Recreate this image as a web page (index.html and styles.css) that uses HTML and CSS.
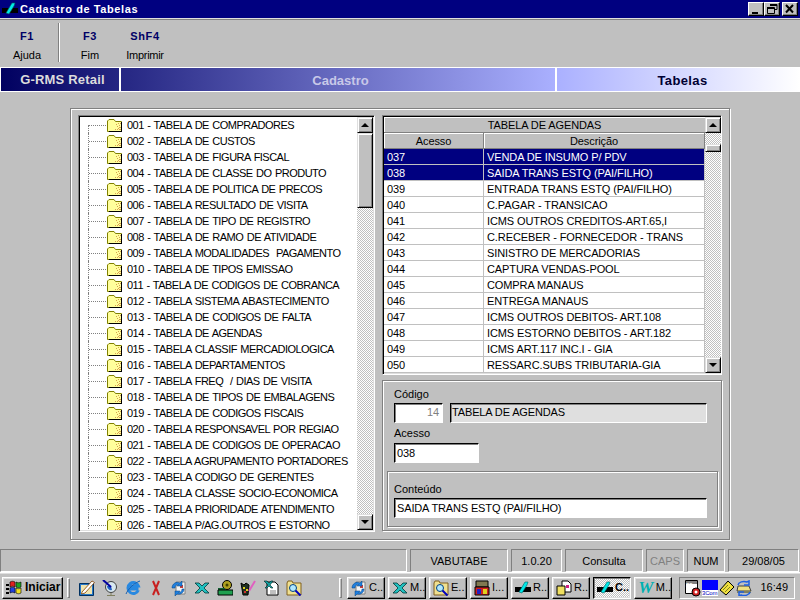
FILE: index.html
```
<!DOCTYPE html>
<html lang="pt">
<head>
<meta charset="utf-8">
<title>Cadastro de Tabelas</title>
<link rel="stylesheet" href="styles.css">
</head>
<body>
<svg class="defs" width="0" height="0">
  <symbol id="folder" viewBox="0 0 16 14">
    <path d="M2 1.500h5l1.500 2h6v10H.5V3z" fill="#ffff9c" stroke="#808000"/>
    <path d="M9 6h1v1H9zM11 5h1v1h-1zM13 5h1v1h-1zM10 8h1v1h-1zM12 7h1v1h-1zM11 10h1v1h-1zM13 9h1v1h-1zM8 11h1v1H8zM13 11h1v1h-1zM12 9h1v1h-1zM10 11h1v1h-1zM12 11h1v1h-1z" fill="#d8a050"/>
    <path d="M15 4v10H2v-1h12V4z" fill="#000"/>
  </symbol>
  <symbol id="i-arrows" viewBox="0 0 16 16">
    <path d="M5 2h9v12H5z" fill="#f4f4f4" stroke="#808080"/>
    <path d="M9 5h3v3H9z" fill="#c04040"/>
    <path d="M1 8C1 4 5 1 9 3L11 1v5H6l1.500-1.500C5.500 4 4 6 4 8z" fill="#2080e0" stroke="#004080" stroke-width=".5"/>
    <path d="M13 9c0 4-4 6-7 5l-2 2v-5h5l-1.500 1.500C9.500 13 11 11 11 9z" fill="#2080e0" stroke="#004080" stroke-width=".5"/>
  </symbol>
  <symbol id="i-x" viewBox="0 0 16 16">
    <path d="M1 3h4l3 3 3-3h4l-5 5 5 5h-4L8 10l-3 3H1l5-5z" fill="#20c0c0" stroke="#003838" stroke-width=".8"/>
  </symbol>
  <symbol id="i-find" viewBox="0 0 16 16">
    <path d="M1 3 2 1h4l1 2h8v12H1z" fill="#f0e090" stroke="#806020"/>
    <circle cx="7" cy="8" r="3.500" fill="#b0e8ff" stroke="#004080"/>
    <path d="m9.500 10.500 5 5" stroke="#0000c0" stroke-width="2"/>
  </symbol>
  <symbol id="i-pen" viewBox="0 0 16 16">
    <path d="M0 7h16v5H0z" fill="#000"/>
    <path d="M4 12 10 2h3l-1 3-5 8z" fill="#00e8e8" stroke="#006060" stroke-width=".6"/>
  </symbol>
</svg>
<header class="titlebar">
  <svg class="app-icon" width="16" height="16" viewBox="0 0 16 16"><use href="#i-pen"/></svg>
  <span class="title-text">Cadastro de Tabelas</span>
  <div class="win-btns">
    <span class="win-btn"><svg width="14" height="12" viewBox="0 0 14 12"><path d="M3 9h6v2H3z"/></svg></span>
    <span class="win-btn"><svg width="14" height="12" viewBox="0 0 14 12"><path d="M5 1.500h7v5h-2M2.500 4.500h7v6h-7z" fill="none" stroke="#000"/><path d="M5 1h7v2H5zM2 4h7v2H2z"/></svg></span>
    <span class="win-btn close"><svg width="14" height="12" viewBox="0 0 14 12"><path d="m3 2 7 7.500M10 2 3 9.500" stroke="#000" stroke-width="2"/></svg></span>
  </div>
</header>

<nav class="toolbar">
  <div class="tool tool-a"><b>F1</b><span>Ajuda</span></div>
  <div class="tool-sep"></div>
  <div class="tool tool-b"><b>F3</b><span>Fim</span></div>
  <div class="tool tool-c"><b>ShF4</b><span>Imprimir</span></div>
</nav>

<div class="band">
  <div class="band-a">G-RMS Retail</div>
  <div class="band-b">Cadastro</div>
  <div class="band-c">Tabelas</div>
</div>

<main class="frame">
  <section class="tree sunken">
    <ul class="tree-list">
      <li><svg class="folder"><use href="#folder"/></svg>001 - TABELA DE COMPRADORES</li>
      <li><svg class="folder"><use href="#folder"/></svg>002 - TABELA DE CUSTOS</li>
      <li><svg class="folder"><use href="#folder"/></svg>003 - TABELA DE FIGURA FISCAL</li>
      <li><svg class="folder"><use href="#folder"/></svg>004 - TABELA DE CLASSE DO PRODUTO</li>
      <li><svg class="folder"><use href="#folder"/></svg>005 - TABELA DE POLITICA DE PRECOS</li>
      <li><svg class="folder"><use href="#folder"/></svg>006 - TABELA RESULTADO DE VISITA</li>
      <li><svg class="folder"><use href="#folder"/></svg>007 - TABELA DE TIPO DE REGISTRO</li>
      <li><svg class="folder"><use href="#folder"/></svg>008 - TABELA DE RAMO DE ATIVIDADE</li>
      <li><svg class="folder"><use href="#folder"/></svg>009 - TABELA MODALIDADES&nbsp; PAGAMENTO</li>
      <li><svg class="folder"><use href="#folder"/></svg>010 - TABELA DE TIPOS EMISSAO</li>
      <li><svg class="folder"><use href="#folder"/></svg>011 - TABELA DE CODIGOS DE COBRANCA</li>
      <li><svg class="folder"><use href="#folder"/></svg>012 - TABELA SISTEMA ABASTECIMENTO</li>
      <li><svg class="folder"><use href="#folder"/></svg>013 - TABELA DE CODIGOS DE FALTA</li>
      <li><svg class="folder"><use href="#folder"/></svg>014 - TABELA DE AGENDAS</li>
      <li><svg class="folder"><use href="#folder"/></svg>015 - TABELA CLASSIF MERCADIOLOGICA</li>
      <li><svg class="folder"><use href="#folder"/></svg>016 - TABELA DEPARTAMENTOS</li>
      <li><svg class="folder"><use href="#folder"/></svg>017 - TABELA FREQ&nbsp; / DIAS DE VISITA</li>
      <li><svg class="folder"><use href="#folder"/></svg>018 - TABELA DE TIPOS DE EMBALAGENS</li>
      <li><svg class="folder"><use href="#folder"/></svg>019 - TABELA DE CODIGOS FISCAIS</li>
      <li><svg class="folder"><use href="#folder"/></svg>020 - TABELA RESPONSAVEL POR REGIAO</li>
      <li><svg class="folder"><use href="#folder"/></svg>021 - TABELA DE CODIGOS DE OPERACAO</li>
      <li><svg class="folder"><use href="#folder"/></svg>022 - TABELA AGRUPAMENTO PORTADORES</li>
      <li><svg class="folder"><use href="#folder"/></svg>023 - TABELA CODIGO DE GERENTES</li>
      <li><svg class="folder"><use href="#folder"/></svg>024 - TABELA CLASSE SOCIO-ECONOMICA</li>
      <li><svg class="folder"><use href="#folder"/></svg>025 - TABELA PRIORIDADE ATENDIMENTO</li>
      <li><svg class="folder"><use href="#folder"/></svg>026 - TABELA P/AG.OUTROS E ESTORNO</li>
    </ul>
    <div class="vscroll">
      <span class="sb-btn"><i class="up"></i></span>
      <span class="sb-thumb tall"></span>
      <span class="sb-track"></span>
      <span class="sb-btn"><i class="down"></i></span>
    </div>
  </section>

  <div class="right">
    <section class="grid sunken">
      <div class="grid-main">
        <div class="grid-title">TABELA DE AGENDAS</div>
        <div class="grid-head"><span class="c1">Acesso</span><span class="c2">Descrição</span></div>
        <div class="grid-row sel"><span class="c1">037</span><span class="c2">VENDA DE INSUMO P/ PDV</span></div>
        <div class="grid-row sel"><span class="c1">038</span><span class="c2">SAIDA TRANS ESTQ (PAI/FILHO)</span></div>
        <div class="grid-row"><span class="c1">039</span><span class="c2">ENTRADA TRANS ESTQ (PAI/FILHO)</span></div>
        <div class="grid-row"><span class="c1">040</span><span class="c2">C.PAGAR - TRANSICAO</span></div>
        <div class="grid-row"><span class="c1">041</span><span class="c2">ICMS OUTROS CREDITOS-ART.65,I</span></div>
        <div class="grid-row"><span class="c1">042</span><span class="c2">C.RECEBER - FORNECEDOR - TRANS</span></div>
        <div class="grid-row"><span class="c1">043</span><span class="c2">SINISTRO DE MERCADORIAS</span></div>
        <div class="grid-row"><span class="c1">044</span><span class="c2">CAPTURA VENDAS-POOL</span></div>
        <div class="grid-row"><span class="c1">045</span><span class="c2">COMPRA MANAUS</span></div>
        <div class="grid-row"><span class="c1">046</span><span class="c2">ENTREGA MANAUS</span></div>
        <div class="grid-row"><span class="c1">047</span><span class="c2">ICMS OUTROS DEBITOS- ART.108</span></div>
        <div class="grid-row"><span class="c1">048</span><span class="c2">ICMS ESTORNO DEBITOS - ART.182</span></div>
        <div class="grid-row"><span class="c1">049</span><span class="c2">ICMS ART.117 INC.I - GIA</span></div>
        <div class="grid-row"><span class="c1">050</span><span class="c2">RESSARC.SUBS TRIBUTARIA-GIA</span></div>
      </div>
      <div class="vscroll">
        <span class="sb-btn"><i class="up"></i></span>
        <span class="sb-track short"></span>
        <span class="sb-thumb small"></span>
        <span class="sb-track"></span>
        <span class="sb-btn"><i class="down"></i></span>
      </div>
    </section>

    <section class="form etched">
      <label class="lbl">Código</label>
      <div class="field-row">
        <span class="input code">14</span>
        <span class="input name">TABELA DE AGENDAS</span>
      </div>
      <label class="lbl lbl-2">Acesso</label>
      <span class="input access">038</span>
      <div class="group etched">
        <label class="lbl">Conteúdo</label>
        <span class="input content">SAIDA TRANS ESTQ (PAI/FILHO)</span>
      </div>
    </section>
  </div>
</main>

<footer class="status">
  <span class="st st-1"></span>
  <span class="st st-2">VABUTABE</span>
  <span class="st st-3">1.0.20</span>
  <span class="st st-4">Consulta</span>
  <span class="st st-5">CAPS</span>
  <span class="st st-6">NUM</span>
  <span class="st st-7">29/08/05</span>
</footer>

<div class="taskbar">
  <button class="start">
    <svg width="18" height="16" viewBox="0 0 18 16"><path d="M0 4h3v2H0zM0 8h3v2H0zM0 12h3v2H0z" fill="#000"/><path d="M4 2c2-1 3-1 5 0v5c-2-1-3-1-5 0z" fill="#e02020" stroke="#000" stroke-width=".6"/><path d="M10 2c2 1 3 1 5 0v5c-2 1-3 1-5 0z" fill="#20a020" stroke="#000" stroke-width=".6"/><path d="M4 8c2-1 3-1 5 0v5c-2-1-3-1-5 0z" fill="#2040e0" stroke="#000" stroke-width=".6"/><path d="M10 8c2 1 3 1 5 0v5c-2 1-3 1-5 0z" fill="#f0e020" stroke="#000" stroke-width=".6"/></svg>
    <b>Iniciar</b>
  </button>
  <span class="grip"></span>
  <div class="quick">
    <svg width="16" height="16" viewBox="0 0 16 16"><path d="M.5 3.500h14v12H.5z" fill="#2878c8" stroke="#003060"/><path d="M2 5h11v9H2z" fill="#f0e4b0"/><path d="M3 12 13 1l2.500 1.500L6 13l-3.500 1z" fill="#fff" stroke="#804000" stroke-width=".8"/></svg>
    <svg width="16" height="16" viewBox="0 0 16 16"><circle cx="9" cy="7" r="5.500" fill="#d8e8f0" stroke="#404040"/><path d="M5 6a4 4 0 0 0 5 4l-1-4z" fill="#2060c0"/><path d="M1 0l8 7" stroke="#0000a0" stroke-width="2"/><path d="M9 13v2M5 15.500h8" stroke="#808060"/></svg>
    <svg width="16" height="16" viewBox="0 0 16 16"><path d="M13.500 10a5.500 5.500 0 1 1 0-4H4.500M4.500 9h9" fill="none" stroke="#2888e0" stroke-width="2.800"/><path d="M1 14C3 9 9 3 15 1" fill="none" stroke="#1860b0"/></svg>
    <svg width="16" height="16" viewBox="0 0 16 16"><path d="M5 1l6 14M11 1 5 15" stroke="#c82020" stroke-width="2"/></svg>
    <svg width="16" height="16" viewBox="0 0 16 16"><use href="#i-arrows"/></svg>
    <svg width="16" height="16" viewBox="0 0 16 16"><use href="#i-x"/></svg>
    <svg width="16" height="16" viewBox="0 0 16 16"><circle cx="10" cy="5" r="4.500" fill="#b0a020" stroke="#000"/><circle cx="10" cy="5" r="1.500" fill="#404000"/><path d="M1 8h7v2H1z" fill="#106030"/><path d="M1 10h15v5H1z" fill="#20a050" stroke="#000"/></svg>
    <svg width="16" height="16" viewBox="0 0 16 16"><path d="M1 3l3 2 2-2 3 2-1 10H3z" fill="#203020" stroke="#000"/><path d="M9 11 15 1" stroke="#e060c0" stroke-width="2"/><path d="M3 7h2v2H3zM6 9h2v2H6z" fill="#e0d020"/><path d="M4 11h2v2H4z" fill="#d03030"/></svg>
    <svg width="16" height="16" viewBox="0 0 16 16"><path d="M4 2h8l3 3v10H4z" fill="#fff" stroke="#000"/><path d="M1 1h3l2 2 2-2h2L7 5l3 3H8L6 6 4 8H2l3-3z" fill="#10a0a0" stroke="#002020" stroke-width=".6"/><path d="M7 10h6v4H7z" fill="#c0c0c0"/></svg>
    <svg width="16" height="16" viewBox="0 0 16 16"><use href="#i-find"/></svg>
  </div>
  <span class="grip"></span>
  <div class="tasks">
    <button class="task"><svg width="16" height="16" viewBox="0 0 16 16"><use href="#i-arrows"/></svg>C..</button>
    <button class="task"><svg width="16" height="16" viewBox="0 0 16 16"><use href="#i-x"/></svg>M..</button>
    <button class="task"><svg width="16" height="16" viewBox="0 0 16 16"><use href="#i-find"/></svg>E..</button>
    <button class="task"><svg width="16" height="16" viewBox="0 0 16 16"><path d="M2 1h12v6H2z" fill="#807850" stroke="#000"/><path d="M1 7h14v8H1z" fill="#d02020" stroke="#000"/><path d="M3 9h4v5H3z" fill="#2020c0"/><path d="M9 9h4v5H9z" fill="#e0d020"/></svg>I...</button>
    <button class="task"><svg width="16" height="16" viewBox="0 0 16 16"><use href="#i-pen"/></svg>R..</button>
    <button class="task"><svg width="16" height="16" viewBox="0 0 16 16"><path d="M6 1h6l3 3v8H6z" fill="#fff" stroke="#000"/><path d="M1 6h8v9H1z" fill="#f0e060" stroke="#000"/><path d="M10 5h3v3h-3z" fill="#d02080"/></svg>R..</button>
    <button class="task active"><svg width="16" height="16" viewBox="0 0 16 16"><use href="#i-pen"/></svg>C..</button>
    <button class="task"><span class="word">W</span>M..</button>
  </div>
  <div class="tray">
    <svg width="16" height="18" viewBox="0 0 16 18"><path d="M.5 1.500h12v13H.5z" fill="#fff" stroke="#000"/><path d="M1 2h11v3H1z" fill="#808080"/><text class="cal-text" x="1" y="8">30</text><circle cx="11" cy="13" r="4" fill="#d02020" stroke="#000"/><circle cx="11" cy="13" r="1.500" fill="#fff"/></svg>
    <span class="com">3Com</span>
    <svg width="16" height="16" viewBox="0 0 16 16"><path d="M1 10 9 1l6 6-8 8z" fill="#f0e040" stroke="#000"/><path d="M4 10l5-5M6 12l5-5" stroke="#808020"/></svg>
    <svg width="16" height="16" viewBox="0 0 16 16"><path d="M2 6h11l2 5H1z" fill="#f0e080" stroke="#404040"/><path d="M1 11h14v2H1z" fill="#808060"/><path d="M2 5a6 4 0 0 1 9-3l2-1v4H8M14 12a6 4 0 0 1-9 3l-2 1v-4h5" fill="none" stroke="#2060e0" stroke-width="1.500"/></svg>
    <span class="clock">16:49</span>
  </div>
</div>
</body>
</html>
```
FILE: styles.css
```
* { box-sizing: border-box; }
html, body { margin: 0; padding: 0; }
body {
  width: 800px; height: 600px; overflow: hidden;
  background: #c0c0c0; color: #000;
  font: 11px/13px "Liberation Sans", Arial, sans-serif;
  display: flex; flex-direction: column;
}
.defs { position: absolute; }
/* title bar */
.titlebar {
  height: 20px; background: #000080; color: #fff;
  display: flex; align-items: flex-start;
  border-bottom: 1px solid #808080; box-shadow: inset 0 -1px #dfdfdf;
  padding: 1px 2px 0 2px;
}
.app-icon { flex: none; }
.title-text { font-weight: bold; font-size: 11px; margin: 2px 0 0 2px; letter-spacing: .6px; }
.win-btns { margin-left: auto; display: flex; }
.win-btn {
  width: 16px; height: 14px; margin-top: 1px; background: #c0c0c0;
  border: 1px solid; border-color: #fff #000 #000 #fff;
  display: flex; align-items: center; justify-content: center;
  box-shadow: inset -1px -1px #808080;
}
.win-btn.close { margin-left: 2px; }
/* toolbar */
.toolbar { height: 47px; display: flex; align-items: flex-start; }
.tool { display: flex; flex-direction: column; align-items: center; padding-top: 10px; }
.tool b { color: #000066; font-size: 11px; letter-spacing: .6px; }
.tool span { margin-top: 6px; }
.tool-a { width: 58px; padding-right: 4px; }
.tool-sep { width: 2px; height: 39px; margin-top: 3px; background: #808080; border-right: 1px solid #fff; }
.tool-b { width: 60px; }
.tool-c { width: 50px; }
.tool-c span { letter-spacing: -.3px; white-space: nowrap; }
/* band */
.band {
  height: 25px; display: flex;
  border-top: 1px solid #fff; border-bottom: 1px solid #fff;
  background: linear-gradient(90deg, #000060 0, #aab0ff 69.5%, #fff 100%);
  font-weight: bold; font-size: 13px; line-height: 25px;
}
.band-a { width: 121px; color: #dcdcdc; text-align: center; border-right: 2px solid #fff; border-left: 1px solid #fff; padding-left: 5px; line-height: 23px; letter-spacing: .2px; }
.band-b { width: 436px; color: #c8c8e8; text-align: center; border-right: 2px solid #fff; padding-left: 5px; }
.band-c { flex: 1; color: #000033; text-align: center; padding-left: 8px; letter-spacing: .4px; }
/* main frame */
.frame {
  margin: 16px 0 0 70px; width: 660px; height: 432px; flex: none;
  border: 1px solid #808080; box-shadow: inset 1px 1px #fff, 1px 1px #fff;
  padding: 6px 7px 7px;
  display: grid; grid-template-columns: 297px 340px; column-gap: 7px;
}
.sunken {
  border: 1px solid; border-color: #808080 #fff #fff #808080;
  box-shadow: inset 1px 1px #000, inset -1px -1px #dfdfdf;
  padding: 1px;
  display: flex; overflow: hidden; background: #fff;
}
/* tree */
.tree-list {
  flex: 1; list-style: none; margin: 0; padding: 0; overflow: hidden; height: 100%;
  letter-spacing: -.52px; word-spacing: .9px;
}
.tree-list li {
  height: 16px; display: flex; align-items: center; white-space: pre;
  padding-left: 27px; position: relative;
}
.tree-list li::before {
  content: ""; position: absolute; left: 8px; top: 0; bottom: 0; width: 19px;
  border-left: 1px dotted #808080;
  background: repeating-linear-gradient(90deg, #808080 0 1px, transparent 1px 2px) 0 8px / 100% 1px no-repeat;
}
.tree-list li:first-child::before { top: 8px; background-position: 0 0; }
.folder { width: 16px; height: 14px; flex: none; margin-right: 4px; position: relative; }
/* scrollbars */
.vscroll { width: 16px; flex: none; display: flex; flex-direction: column; height: 100%; background: #c0c0c0; }
.sb-btn {
  height: 16px; flex: none; background: #c0c0c0;
  border: 1px solid; border-color: #dfdfdf #000 #000 #dfdfdf;
  box-shadow: inset 1px 1px #fff, inset -1px -1px #808080;
  display: flex; align-items: center; justify-content: center;
}
.sb-btn i { width: 0; height: 0; border-left: 4px solid transparent; border-right: 4px solid transparent; }
.sb-btn .up { border-bottom: 4px solid #000; }
.sb-btn .down { border-top: 4px solid #000; }
.sb-track { flex: 1; background: repeating-conic-gradient(#c0c0c0 0 25%, #fff 0 50%) 0 0 / 2px 2px; }
.sb-track.short { flex: 0 0 11px; }
.sb-thumb {
  flex: none; background: #c0c0c0;
  border: 1px solid; border-color: #dfdfdf #000 #000 #dfdfdf;
  box-shadow: inset 1px 1px #fff, inset -1px -1px #808080;
}
.sb-thumb.tall { height: 75px; }
.sb-thumb.small { height: 8px; }
/* right column */
.right { display: flex; flex-direction: column; gap: 5px; }
.grid { height: 260px; flex: none; background: #c0c0c0; padding: 1px 0 1px 1px; letter-spacing: -.1px; }
.grid-main { flex: 1; display: flex; flex-direction: column; }
.grid-title {
  height: 16px; flex: none; text-align: center; line-height: 17px;
  border-bottom: 1px solid #808080; box-shadow: inset 1px 1px #fff;
}
.grid-head, .grid-row {
  height: 16px; flex: none; display: grid;
  grid-template-columns: 100px 1fr; grid-template-rows: 16px; line-height: 15px;
}
.grid-head span { text-align: center; box-shadow: inset 1px 1px #fff; border-right: 1px solid #808080; border-bottom: 1px solid #808080; padding-top: 1px; }
.grid-row { background: #fff; }
.grid-row span { padding: 1px 0 0 3px; border-right: 1px solid #c0c0c0; border-bottom: 1px solid #c0c0c0; white-space: nowrap; }
.grid-row.sel { background: #000080; color: #fff; }
/* form */
.form { height: 151px; flex: none; padding: 7px 3px 3px 11px; display: flex; flex-direction: column; align-items: flex-start; }
.etched { border: 1px solid #808080; box-shadow: inset 1px 1px #fff, 1px 1px #fff; }
.lbl { display: block; height: 15px; line-height: 13px; }
.field-row { display: flex; gap: 7px; }
.input {
  display: block; background: #fff; height: 20px;
  border: 1px solid; border-color: #000 #fff #fff #000;
  box-shadow: inset 1px 1px #808080;
  padding: 2px 2px 1px; line-height: 13px; white-space: nowrap; letter-spacing: -.14px;
}
.input.code { width: 49px; text-align: right; color: #808080; padding-right: 3px; }
.input.name { width: 257px; background: #dfdfdf; padding-left: 1px; }
.input.access { width: 85px; height: 21px; padding-top: 3px; }
.lbl-2 { margin-top: 4px; margin-bottom: 1px; }
.group { margin: 8px 0 0 -7px; width: 331px; height: 56px; padding: 11px 0 0 6px; }
.group .lbl { height: 14px; margin-bottom: 1px; }
.input.content { width: 313px; padding-top: 3px; }
/* status */
.status { margin-top: 9px; height: 23px; display: flex; gap: 3px; flex: none; }
.st {
  text-align: center; line-height: 23px; height: 23px;
  border: 1px solid; border-color: #808080 #fff #fff #808080;
}
.st-1 { width: 407px; }
.st-2 { width: 98px; }
.st-3 { width: 51px; }
.st-4 { width: 78px; }
.st-5 { width: 38px; color: #808080; }
.st-6 { width: 38px; }
.st-7 { width: 71px; }
/* taskbar */
.taskbar {
  height: 28px; flex: none; border-top: 1px solid #fff;
  box-shadow: inset 0 1px #dfdfdf;
  display: flex; align-items: center; padding: 2px 2px 0;
}
.start, .task {
  font: inherit; color: #000; background: #c0c0c0; height: 22px; padding: 0;
  border: 1px solid; border-color: #fff #000 #000 #fff;
  box-shadow: inset -1px -1px #808080, inset 1px 1px #dfdfdf;
  display: flex; align-items: center;
}
.start { width: 61px; padding-left: 3px; gap: 1px; }
.start b { font-size: 12px; }
.grip {
  width: 3px; height: 20px; flex: none; margin: 0 0 0 4px;
  border: 1px solid; border-color: #fff #808080 #808080 #fff; background: #c0c0c0;
}
.quick { width: 265px; display: flex; gap: 7px; padding-left: 9px; }
.quick svg { flex: none; }
.tasks { display: flex; gap: 3px; margin-left: 5px; }
.task { width: 38px; padding-left: 3px; gap: 2px; white-space: nowrap; overflow: hidden; }
.task svg { flex: none; }
.task.active {
  border-color: #000 #fff #fff #000; font-weight: bold;
  box-shadow: inset 1px 1px #808080, inset -1px -1px #dfdfdf;
  background: repeating-conic-gradient(#c0c0c0 0 25%, #fff 0 50%) 0 0 / 2px 2px;
}
.word { font: italic bold 17px/16px "Liberation Serif", serif; color: #00b0b0; width: 16px; }
.tray {
  margin-left: 7px; width: 116px; height: 22px; flex: none;
  border: 1px solid; border-color: #808080 #fff #fff #808080;
  display: flex; align-items: center; padding-left: 5px; gap: 1px;
}
.cal-text { font: bold 6px "Liberation Sans", sans-serif; fill: #fff; }
.com {
  width: 16px; height: 16px; flex: none; background: linear-gradient(#0000ff 0 10px, #fff 10px);
  color: #0000c0; font-size: 6px; line-height: 6px; padding-top: 10px; letter-spacing: -.2px; white-space: nowrap; overflow: hidden;
}
.clock { margin-left: auto; margin-right: 6px; }
```
